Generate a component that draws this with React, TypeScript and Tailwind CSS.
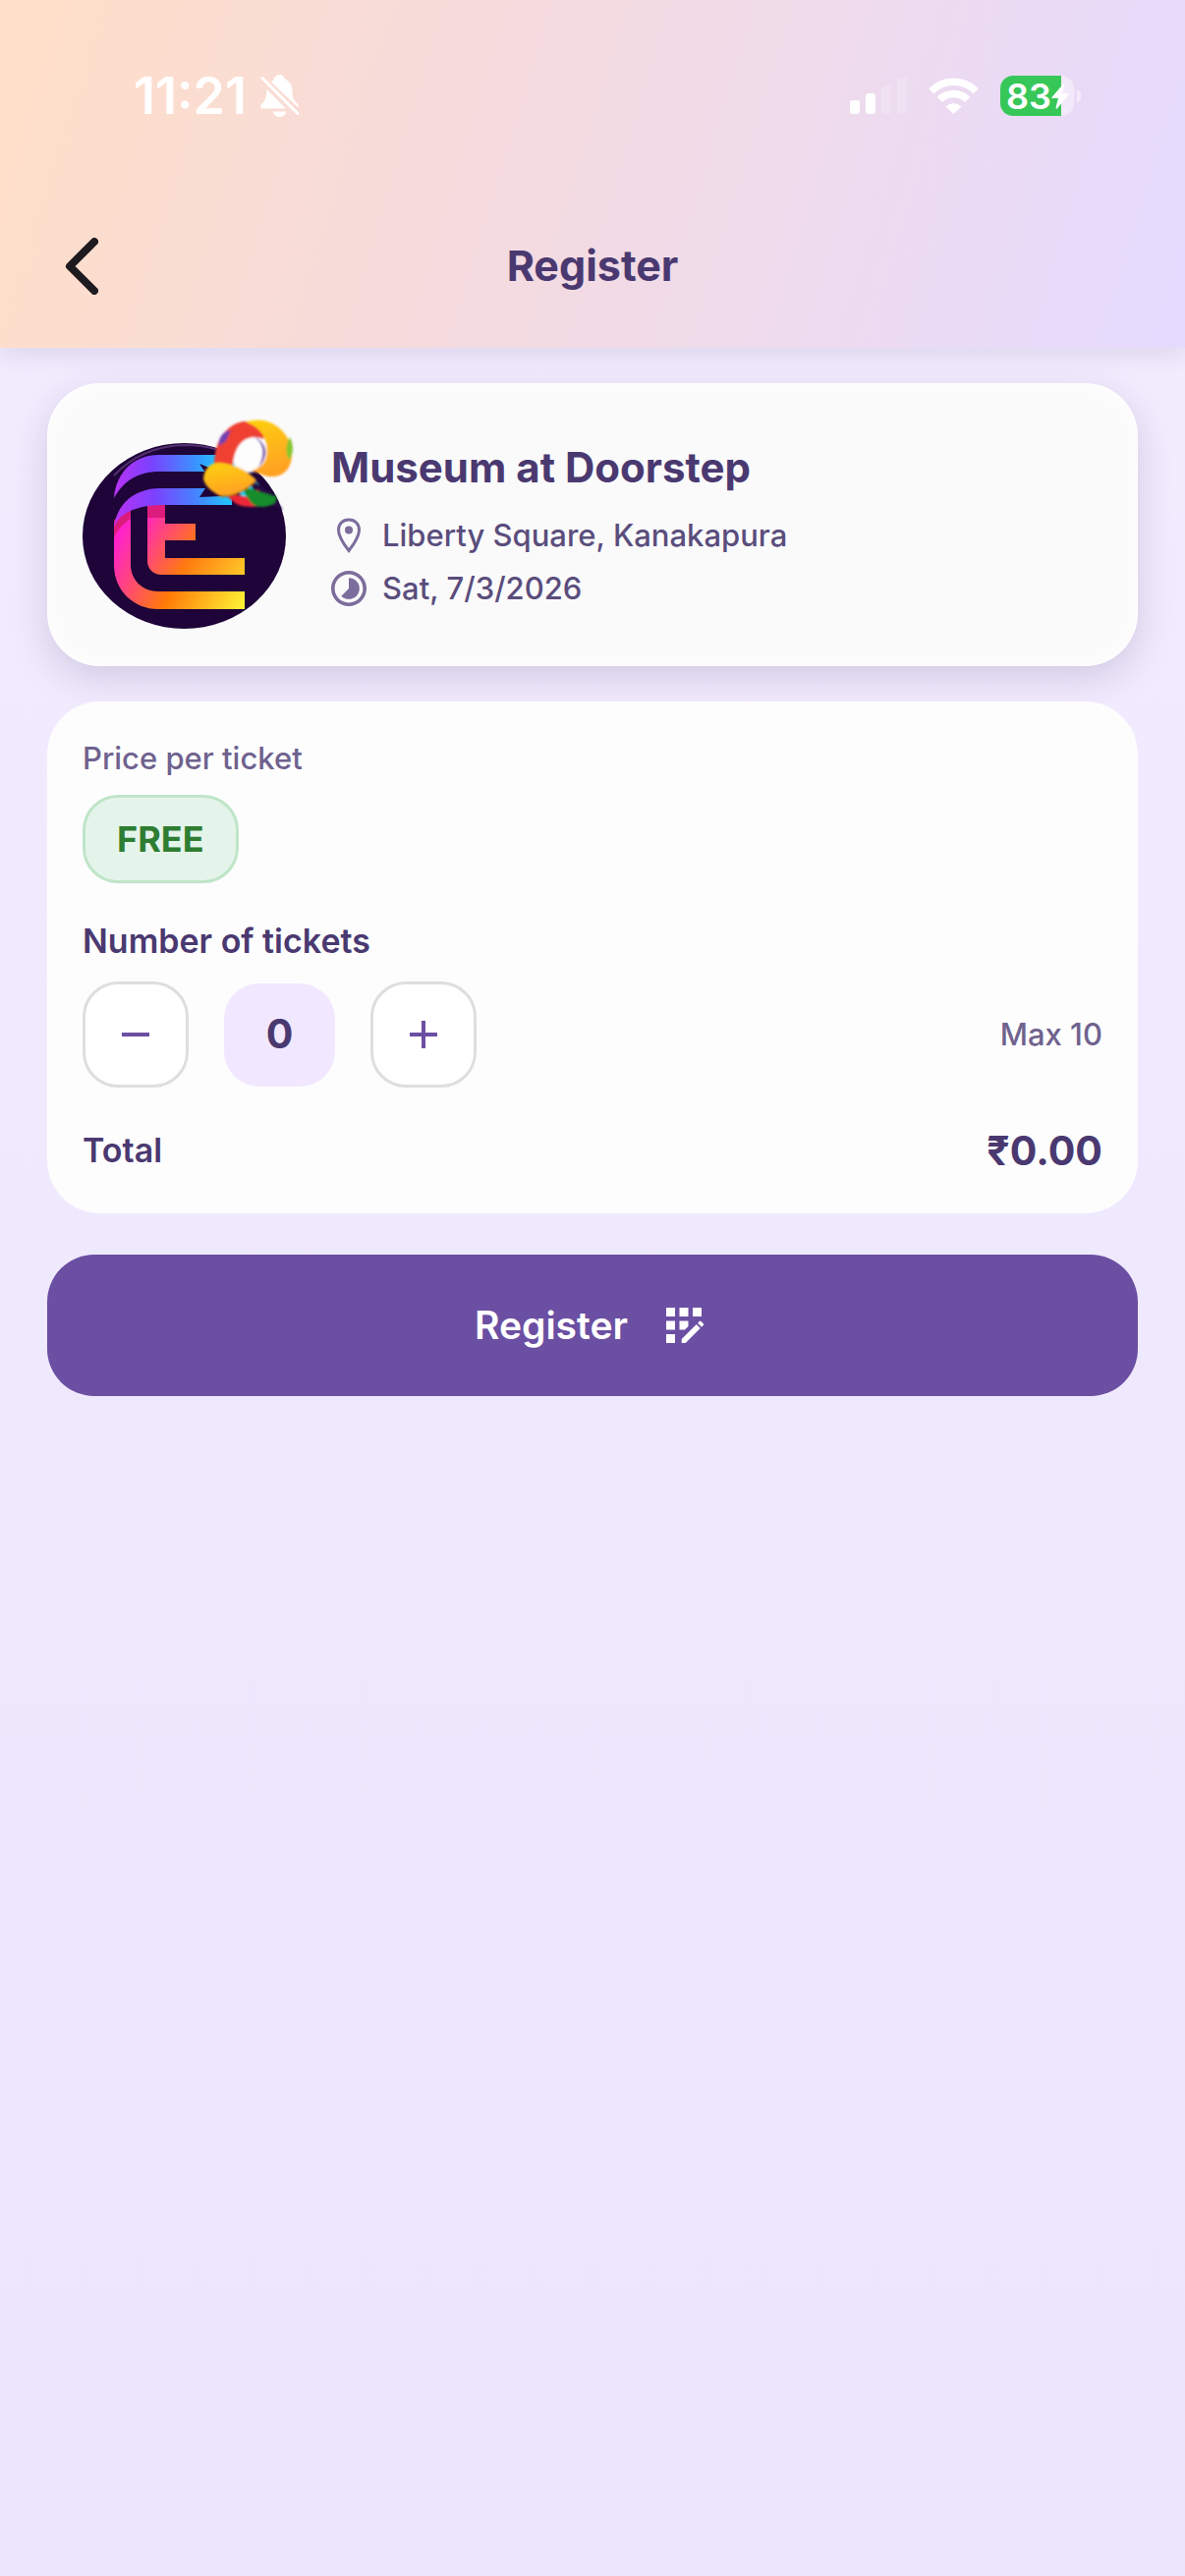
import { useState } from 'react';
import { MdAppRegistration, MdTimelapse } from 'react-icons/md';

const MAX_TICKETS = 10;

function BellOff() {
  return (
    <svg viewBox="0 0 40 44" className="h-[44px] w-[40px]" fill="white" aria-label="Silent mode">
      <path d="M11 7.500C12.500 6 13 5.500 13.500 5C14.500 2 17 0 19.500 0C22.500 0 24.500 2 25.500 5C30 6.500 32.500 11 32.500 16C32.500 24 34 26 38 30C39 31 39 32 38.500 33.500Z" />
      <path d="M6.500 15L26 34.500H2C0 34.500 -0.500 32 1 30C4.500 27 6 25 6.500 15Z" />
      <path d="M13 37.500H26C25.500 41 23 43 19.500 43C16 43 13.500 41 13 37.500Z" />
      <path d="M2 3.500L38 39.500" stroke="white" strokeWidth="3" strokeLinecap="round" />
    </svg>
  );
}

function Signal() {
  return (
    <svg viewBox="0 0 58 37" className="h-[37px] w-[58px]" fill="white" aria-label="Signal">
      <rect x="0" y="23" width="10" height="14" rx="3" />
      <rect x="16" y="16" width="10" height="21" rx="3" />
      <rect x="32" y="8" width="10" height="29" rx="3" opacity="0.2" />
      <rect x="48" y="0" width="10" height="37" rx="3" opacity="0.2" />
    </svg>
  );
}

function Wifi() {
  return (
    <svg viewBox="0 0 51 37" className="h-[37px] w-[51px]" aria-label="Wi-Fi">
      <g fill="none" stroke="white" strokeWidth="7.500">
        <path d="M2.800 13.800A32 32 0 0 1 48.200 13.800" />
        <path d="M11.300 22.300A20 20 0 0 1 39.700 22.300" />
      </g>
      <path fill="white" d="M17.500 29.500Q25.500 22.500 33.500 29.500L25.500 37Z" />
    </svg>
  );
}

function Battery() {
  return (
    <div className="flex items-center gap-[3px]">
      <div className="relative flex h-[41px] w-[75px] items-center overflow-hidden rounded-[13px] bg-white/40">
        <div className="absolute inset-y-0 left-0 w-[83%] bg-[#37c759]" />
        <span className="relative pl-[6px] text-[36px] leading-none font-semibold">83</span>
        <svg viewBox="0 0 18 26" className="absolute right-[5px] h-[26px] w-[18px]" fill="white">
          <path d="M12.500 0L0.500 14C0 14.800 0.300 15 1 15H7L4.500 24.500C4.500 26 5.500 26 6.300 25L17.500 11.500C18 10.700 17.700 10.300 17 10.300H11L13.500 1C13.700 0 13 -0.500 12.500 0Z" />
        </svg>
      </div>
      <div className="h-[12px] w-[4px] rounded-r-full bg-white/40" />
    </div>
  );
}

function StatusBar() {
  return (
    <div className="flex h-[195px] items-center justify-between pr-[106px] pl-[136px] text-white">
      <div className="flex items-center gap-[14px]">
        <span className="text-[52px] leading-none font-semibold">11:21</span>
        <BellOff />
      </div>
      <div className="flex items-center gap-[22px]">
        <Signal />
        <Wifi />
        <Battery />
      </div>
    </div>
  );
}

function EventLogo() {
  return (
    <svg viewBox="0 2 216 216" className="size-[216px] shrink-0" aria-label="Museum at Doorstep logo">
      <defs>
        <linearGradient id="cool" x1="0" y1="0" x2="1" y2="0">
          <stop offset="0" stopColor="#b833f5" />
          <stop offset="0.350" stopColor="#7b41ff" />
          <stop offset="0.750" stopColor="#3d8fff" />
          <stop offset="1" stopColor="#1fc8ff" />
        </linearGradient>
        <linearGradient id="warm" gradientUnits="userSpaceOnUse" x1="35" y1="125" x2="165" y2="190">
          <stop offset="0" stopColor="#ff22cc" />
          <stop offset="0.500" stopColor="#ff7a08" />
          <stop offset="1" stopColor="#fff235" />
        </linearGradient>
        <linearGradient id="warmInner" gradientUnits="userSpaceOnUse" x1="70" y1="100" x2="165" y2="160">
          <stop offset="0" stopColor="#ff2bb4" />
          <stop offset="0.500" stopColor="#ff7a10" />
          <stop offset="1" stopColor="#ffc928" />
        </linearGradient>
        <linearGradient id="gold" x1="0" y1="0" x2="0.300" y2="1">
          <stop offset="0" stopColor="#fdd20c" />
          <stop offset="1" stopColor="#ffa224" />
        </linearGradient>
        <filter id="soft" x="-10%" y="-10%" width="120%" height="120%">
          <feGaussianBlur stdDeviation="1.200" />
        </filter>
      </defs>
      <ellipse cx="103.500" cy="121.500" rx="103.500" ry="94.500" fill="#1e0438" />
      <path d="M32 60C50 41 72 30 103 29C128 29 149 36 164 47" fill="none" stroke="#54306f" strokeWidth="2" />
      <path d="M32 83C34 57 52 39 78 39H140V56H78C57 56 42 65 32 83Z" fill="url(#cool)" />
      <path d="M32 118V151C32 177 52 196 77 196H165V178H77C61 178 49 166 49 151V93L32 112Z" fill="url(#warm)" />
      <path d="M66 86H84V109H115V126H84V144H165V161H81C72 161 66 155 66 147Z" fill="url(#warmInner)" />
      <path d="M66 86H84V103H66ZM32 124C34 117 40 110 49 104V86L32 106Z" fill="#dc1c7d" />
      <path d="M32 114C34 89 53 73 79 73H152V90H82C56 90 36 98 32 114Z" fill="url(#cool)" />
      <path d="M119 48L134 54H142V81L119 82L125 73L119 72L125 57Z" fill="#1e0438" />
      <g filter="url(#soft)">
        <path d="M153 42L194 84H165L143 61Z" fill="#12d8f0" />
        <path d="M165 60L190 76L204 95L180 85Z" fill="#260842" />
        <circle cx="170" cy="38" r="19" fill="#fdfdfd" />
        <path d="M134 50C134 25 145 9 163 5H188L184 23C168 16 154 27 153 51Z" fill="#f04030" />
        <path d="M139 30C138 21 143 15 151 14L146 25Z" fill="#7141b0" />
        <path d="M166 6C190 -4 214 17 213 39C213 54 202 65 185 60L172 55C186 51 189 42 187 28C184 16 177 9 166 6Z" fill="url(#gold)" />
        <path d="M172 19C188 26 191 39 179 52C187 36 184 26 172 19Z" fill="#713eaa" />
        <path d="M211 21C216 31 214 39 210 44C206 36 207 28 211 21Z" fill="#86c62e" />
        <path d="M176 83L142 77L154 87C162 94 178 92 184 90L178 73Z" fill="#ed2637" />
        <path d="M162 72C172 72 182 79 197 81C200 90 183 95 174 90C169 86 166 79 162 72Z" fill="#178d2c" />
        <path d="M123 63C124 53 130 47 139 47C153 48 167 54 177 65C166 76 153 82 140 81C131 76 124 70 123 63Z" fill="url(#gold)" />
        <path d="M140 81C153 82 166 76 177 65" fill="none" stroke="#98620b" strokeWidth="1.500" />
      </g>
    </svg>
  );
}

function PinIcon() {
  return (
    <svg viewBox="0 0 36 36" className="size-[36px]" fill="none" aria-hidden="true">
      <path
        d="M18 2C11.500 2 7.500 6.500 7.500 12.500C7.500 19 12.500 26.500 18 33.500C23.500 26.500 28.500 19 28.500 12.500C28.500 6.500 24.500 2 18 2Z"
        stroke="currentColor"
        strokeWidth="3"
      />
      <circle cx="18" cy="12.500" r="4" fill="currentColor" />
    </svg>
  );
}

function EventCard() {
  return (
    <section className="flex items-center gap-[37px] rounded-[54px] bg-[#fafafb] p-[36px] shadow-[inset_0_0_36px_#ffffff,0_12px_36px_rgba(50,40,90,0.17)]">
      <EventLogo />
      <div className="min-w-0 text-[31px] font-medium text-[#5a4d7c]">
        <h2 className="text-[42px] leading-[54px] font-bold text-[#4a3970]">Museum at Doorstep</h2>
        <p className="mt-[21px] flex items-center gap-[16px] leading-[42px]">
          <span className="text-[#7c6d9c]"><PinIcon /></span>
          Liberty Square, Kanakapura
        </p>
        <p className="mt-[12px] flex items-center gap-[16px] leading-[42px]">
          <MdTimelapse viewBox="2 2 20 20" className="size-[36px] text-[#7c6d9c]" />
          Sat, 7/3/2026
        </p>
      </div>
    </section>
  );
}

interface StepButtonProps {
  label: string;
  onClick: () => void;
  plus?: boolean;
}

function StepButton({ label, onClick, plus }: StepButtonProps) {
  return (
    <button
      type="button"
      aria-label={label}
      onClick={onClick}
      className="flex size-[108px] items-center justify-center rounded-[36px] border-3 border-[#dedede] bg-white"
    >
      <svg viewBox="0 0 28 28" className="size-[28px]" stroke="#6b4fa2" strokeWidth="4">
        <path d={plus ? 'M0 14H28M14 0V28' : 'M0 14H28'} />
      </svg>
    </button>
  );
}

export default function App() {
  const [count, setCount] = useState(0);

  return (
    <div className="min-h-screen bg-gradient-to-b from-[#f4edff] via-[#efe9fe] to-[#ece5fc] font-['Inter','Liberation_Sans',sans-serif] text-[#4a3970]">
      <header className="bg-[linear-gradient(107deg,#ffdfc7_0%,#f6dbdc_38%,#e5daff_100%)] shadow-[0_6px_24px_rgba(50,40,90,0.12)]">
        <StatusBar />
        <div className="grid h-[159px] grid-cols-[1fr_auto_1fr] items-center px-[66px] pb-[8px]">
          <button type="button" aria-label="Back" className="justify-self-start">
            <svg viewBox="0 0 34 58" className="h-[58px] w-[34px]" fill="none" stroke="#1d1b20" strokeWidth="8" strokeLinecap="round" strokeLinejoin="round">
              <path d="M30 4L5 29L30 54" />
            </svg>
          </button>
          <h1 className="text-[43px] leading-none font-bold">Register</h1>
        </div>
      </header>

      <main className="flex flex-col gap-[36px] px-[48px] pt-[36px] pb-[48px]">
        <EventCard />

        <section className="rounded-[54px] bg-[#fdfdfe] px-[36px] pt-[37px] pb-[36px]">
          <p className="text-[31px] leading-[42px] font-medium text-[#6f628e]">Price per ticket</p>
          <div className="mt-[16px] flex h-[90px] w-fit items-center rounded-[36px] border-3 border-[#bfe5c8] bg-[#e5f4ea] px-[32px] text-[36px] font-bold text-[#2e7d32]">
            FREE
          </div>

          <h2 className="mt-[36px] text-[34px] leading-[46px] font-semibold">Number of tickets</h2>
          <div className="mt-[18px] flex items-center gap-[36px]">
            <StepButton label="Remove ticket" onClick={() => setCount(Math.max(0, count - 1))} />
            <output className="flex h-[105px] w-[113px] items-center justify-center rounded-[36px] bg-[#f1e8ff] text-[41px] font-bold">
              {count}
            </output>
            <StepButton label="Add ticket" plus onClick={() => setCount(Math.min(MAX_TICKETS, count + 1))} />
            <span className="ml-auto text-[31px] font-medium text-[#6f628e]">Max {MAX_TICKETS}</span>
          </div>

          <div className="mt-[36px] flex items-center justify-between">
            <span className="text-[34px] leading-[56px] font-semibold">Total</span>
            <span className="text-[41px] leading-[56px] font-bold">₹0.00</span>
          </div>
        </section>

        <button
          type="button"
          className="mt-[6px] flex h-[144px] items-center justify-center gap-[30px] rounded-[48px] bg-[#6b4fa2] text-[39px] font-semibold text-white"
        >
          Register
          <MdAppRegistration className="size-[54px]" />
        </button>
      </main>
    </div>
  );
}
